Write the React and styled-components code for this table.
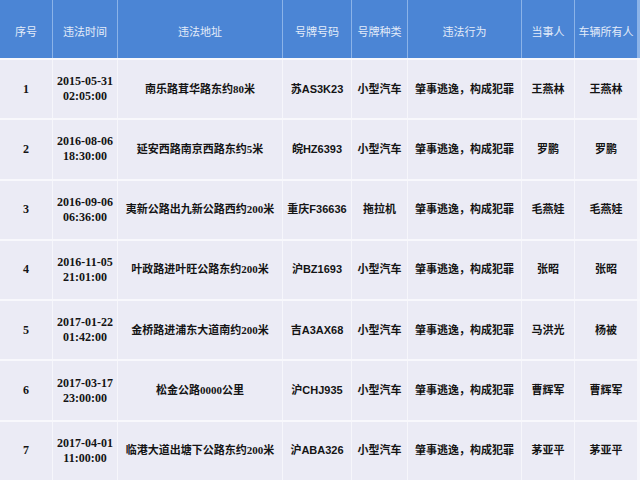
import React from "react";
import styled, { createGlobalStyle } from "styled-components";

const Global = createGlobalStyle`
  html, body { margin: 0; padding: 0; background: #f8f8fc; }
  body { width: 640px; height: 480px; overflow: hidden; }
`;

const COLS = "52px 64px 164px 68px 55px 113px 52px 1fr";

const Table = styled.div`
  width: 640px;
  height: 480px;
  display: flex;
  flex-direction: column;
  gap: 2px;
  background: #f8f8fc;
`;

const HeaderRow = styled.div`
  display: grid;
  grid-template-columns: ${COLS};
  column-gap: 1px;
  height: 58px;
  flex: none;
  background: #8bb3e8;
  padding-right: 3px;
`;

const HeadCell = styled.div`
  background: #4b85d5;
  color: #e4ecf9;
  font-family: "Noto Sans CJK SC", "Liberation Sans", sans-serif;
  font-size: 11px;
  display: flex;
  align-items: center;
  justify-content: center;
  white-space: nowrap;
  padding-top: 4px;
`;

const Row = styled.div`
  display: grid;
  grid-template-columns: ${COLS};
  column-gap: 1px;
  flex: 1;
  padding-right: 3px;
  background: #f6f6fb;
`;

const Cell = styled.div`
  background: #ebebf5;
  color: #141414;
  font-family: ${(p) =>
    p.$kind === "date"
      ? `"Liberation Serif", serif`
      : p.$kind === "plate"
      ? `"Liberation Sans", "Noto Sans CJK SC", sans-serif`
      : `"Liberation Serif", "Noto Sans CJK SC", serif`};
  font-size: ${(p) => (p.$kind === "date" ? "12px" : "11px")};
  font-weight: 700;
  line-height: 15px;
  display: flex;
  flex-direction: column;
  align-items: center;
  justify-content: center;
  text-align: center;
  white-space: nowrap;
`;

const headers = ["序号", "违法时间", "违法地址", "号牌号码", "号牌种类", "违法行为", "当事人", "车辆所有人"];

const rows = [
  ["1", "2015-05-31", "02:05:00", "南乐路茸华路东约80米", "苏AS3K23", "小型汽车", "王燕林", "王燕林"],
  ["2", "2016-08-06", "18:30:00", "延安西路南京西路东约5米", "皖HZ6393", "小型汽车", "罗鹏", "罗鹏"],
  ["3", "2016-09-06", "06:36:00", "夷新公路出九新公路西约200米", "重庆F36636", "拖拉机", "毛燕娃", "毛燕娃"],
  ["4", "2016-11-05", "21:01:00", "叶政路进叶旺公路东约200米", "沪BZ1693", "小型汽车", "张昭", "张昭"],
  ["5", "2017-01-22", "01:42:00", "金桥路进浦东大道南约200米", "吉A3AX68", "小型汽车", "马洪光", "杨被"],
  ["6", "2017-03-17", "23:00:00", "松金公路0000公里", "沪CHJ935", "小型汽车", "曹辉军", "曹辉军"],
  ["7", "2017-04-01", "11:00:00", "临港大道出塘下公路东约200米", "沪ABA326", "小型汽车", "茅亚平", "茅亚平"],
];

export default function App() {
  return (
    <>
      <Global />
      <Table>
        <HeaderRow>
          {headers.map((h) => (
            <HeadCell key={h}>{h}</HeadCell>
          ))}
        </HeaderRow>
        {rows.map((r) => (
          <Row key={r[0]}>
            <Cell $kind="date">{r[0]}</Cell>
            <Cell $kind="date">
              <span>{r[1]}</span>
              <span>{r[2]}</span>
            </Cell>
            <Cell>{r[3]}</Cell>
            <Cell $kind="plate">{r[4]}</Cell>
            <Cell>{r[5]}</Cell>
            <Cell>肇事逃逸，构成犯罪</Cell>
            <Cell>{r[6]}</Cell>
            <Cell>{r[7]}</Cell>
          </Row>
        ))}
      </Table>
    </>
  );
}
